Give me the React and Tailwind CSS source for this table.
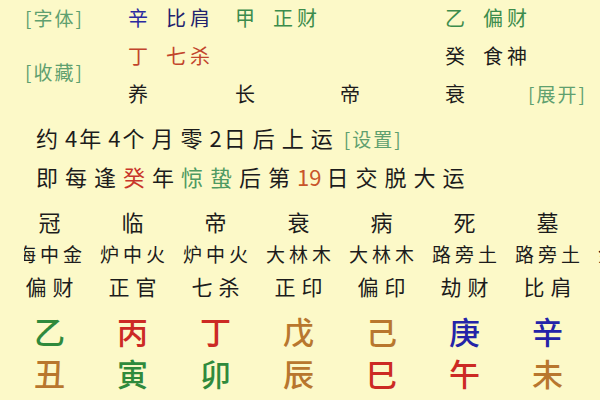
import React from "react";

const cjk = { fontFamily: '"Noto Sans CJK SC", "Noto Sans", sans-serif' };

const changsheng = ["冠", "临", "帝", "衰", "病", "死", "墓"];
const nayin = ["海中金", "炉中火", "炉中火", "大林木", "大林木", "路旁土", "路旁土", "金箔金"];
const shishen = ["偏财", "正官", "七杀", "正印", "偏印", "劫财", "比肩"];

const stems = [
  { t: "乙", c: "text-[#2f8a3c]" },
  { t: "丙", c: "text-[#cc2a24]" },
  { t: "丁", c: "text-[#cc2a24]" },
  { t: "戊", c: "text-[#b8772e]" },
  { t: "己", c: "text-[#b8772e]" },
  { t: "庚", c: "text-[#2424a8]" },
  { t: "辛", c: "text-[#2424a8]" },
];

const branches = [
  { t: "丑", c: "text-[#b8772e]" },
  { t: "寅", c: "text-[#2f8a3c]" },
  { t: "卯", c: "text-[#2f8a3c]" },
  { t: "辰", c: "text-[#b8772e]" },
  { t: "巳", c: "text-[#cc2a24]" },
  { t: "午", c: "text-[#cc2a24]" },
  { t: "未", c: "text-[#b8772e]" },
];

function Link({ children }) {
  return (
    <span className="text-[19px] tracking-[2px] text-[#5fa06f]">[{children}]</span>
  );
}

function Pillar({ stem, stemColor, word, wordColor }) {
  return (
    <div className="flex items-center gap-[18px]">
      <span className={stemColor}>{stem}</span>
      <span className={`tracking-[4px] ${wordColor}`}>{word}</span>
    </div>
  );
}

// digits sit tighter than the CJK glyphs around them
function Num({ children, className = "" }) {
  return <span className={`tracking-normal ${className}`}>{children}</span>;
}

export default function App() {
  return (
    <div className="w-[600px] h-[400px] overflow-hidden bg-[#fcf9c8] text-[#1c1c1c]" style={cjk}>
      {/* Top: hidden stems */}
      <div className="flex pl-[25px]">
        <div className="w-[103px] flex flex-col">
          <div className="h-[36px] flex items-center">
            <Link>字体</Link>
          </div>
          <div className="h-[50px] flex items-end">
            <Link>收藏</Link>
          </div>
        </div>

        <div className="grid grid-cols-[107px_105px_105px_83px_auto] text-[20px]">
          {/* row 1 */}
          <div className="h-[36px] flex items-center">
            <Pillar stem="辛" stemColor="text-[#2a2aa0]" word="比肩" wordColor="text-[#22226e]" />
          </div>
          <div className="h-[36px] flex items-center">
            <Pillar stem="甲" stemColor="text-[#3c8c4c]" word="正财" wordColor="text-[#3c8c4c]" />
          </div>
          <div />
          <div className="h-[36px] flex items-center col-span-2">
            <Pillar stem="乙" stemColor="text-[#3c8c4c]" word="偏财" wordColor="text-[#3c8c4c]" />
          </div>

          {/* row 2 */}
          <div className="h-[40px] flex items-center">
            <Pillar stem="丁" stemColor="text-[#c2452c]" word="七杀" wordColor="text-[#c2452c]" />
          </div>
          <div />
          <div />
          <div className="h-[40px] flex items-center col-span-2">
            <Pillar stem="癸" stemColor="text-[#1c1c1c]" word="食神" wordColor="text-[#1c1c1c]" />
          </div>

          {/* row 3 */}
          <div className="h-[36px] flex items-center">养</div>
          <div className="h-[36px] flex items-center">长</div>
          <div className="h-[36px] flex items-center">帝</div>
          <div className="h-[36px] flex items-center">衰</div>
          <div className="h-[36px] flex items-center">
            <Link>展开</Link>
          </div>
        </div>
      </div>

      {/* Luck start */}
      <div className="pl-[36px] mt-[5px] text-[22px] tracking-[7px]">
        <div className="h-[40px] flex items-center">
          <span>
            约<Num className="pr-[2px]">4</Num>年<Num className="pr-[2px]">4</Num>个月零<Num className="pr-[2px]">2</Num>日后上运
          </span>
          <span className="ml-[4px]">
            <Link>设置</Link>
          </span>
        </div>
        <div className="h-[38px] flex items-center">
          <span>
            即每逢<span className="text-[#c8352a]">癸</span>年
            <span className="text-[#4f9a62]">惊蛰</span>后第
            <Num className="text-[#c8552a] pr-[5px]">19</Num>日交脱大运
          </span>
        </div>
      </div>

      {/* Pillars table */}
      <div className="pl-[8px] mt-[8px] text-[22px]">
        <div className="grid grid-cols-[repeat(7,83px)] h-[36px] items-center text-center">
          {changsheng.map((c, i) => (
            <div key={i}>{c}</div>
          ))}
        </div>
      </div>

      <div className="ml-[24px] overflow-hidden">
        <div className="-ml-[16px] grid grid-cols-[repeat(8,83px)] w-[664px] h-[30px] items-center text-center text-[19px] tracking-[4px] whitespace-nowrap">
          {nayin.map((c, i) => (
            <div key={i} className="pl-[4px]">{c}</div>
          ))}
        </div>
      </div>

      <div className="pl-[8px] text-[21px]">
        <div className="grid grid-cols-[repeat(7,83px)] h-[36px] items-center text-center tracking-[6px]">
          {shishen.map((c, i) => (
            <div key={i} className="pl-[6px]">{c}</div>
          ))}
        </div>

        <div className="grid grid-cols-[repeat(7,83px)] h-[36px] mt-[7px] items-center text-center text-[31px] leading-none font-medium">
          {stems.map((s, i) => (
            <div key={i} className={s.c}>{s.t}</div>
          ))}
        </div>

        <div className="grid grid-cols-[repeat(7,83px)] h-[36px] mt-[6px] items-center text-center text-[31px] leading-none font-medium">
          {branches.map((s, i) => (
            <div key={i} className={s.c}>{s.t}</div>
          ))}
        </div>
      </div>
    </div>
  );
}
